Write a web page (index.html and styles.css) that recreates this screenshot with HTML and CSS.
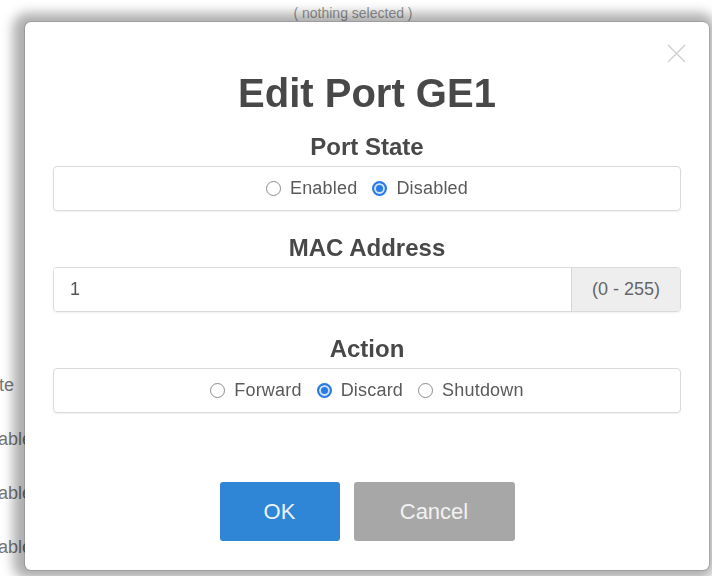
FILE: index.html
```html
<!DOCTYPE html>
<html lang="en">
<head>
    <meta charset="UTF-8">
    <meta name="viewport" content="width=device-width, initial-scale=1.0">
    <title>Edit Port GE1</title>
    <link rel="stylesheet" href="styles.css">
</head>
<body>
    <!-- page behind the dialog -->
    <div class="page">
        <div class="page-select">( nothing selected )</div>
        <div class="page-table">
            <div class="page-row page-row-head">State</div>
            <div class="page-row">Enabled</div>
            <div class="page-row">Enabled</div>
            <div class="page-row">Enabled</div>
        </div>
    </div>

    <div class="modal">
        <button class="modal-close" aria-label="Close">
            <svg width="19" height="19" viewBox="0 0 19 19">
                <path d="M1 1L18 18M18 1L1 18" stroke="#cfcfcf" stroke-width="1.4" fill="none"/>
            </svg>
        </button>

        <h1>Edit Port GE1</h1>

        <div class="field">
            <div class="field-title">Port State</div>
            <div class="field-box radios">
                <label class="radio"><input type="radio" name="state">Enabled</label>
                <label class="radio"><input type="radio" name="state" checked>Disabled</label>
            </div>
        </div>

        <div class="field">
            <div class="field-title">MAC Address</div>
            <div class="field-box input-group">
                <input type="text" value="1">
                <span class="addon">(0 - 255)</span>
            </div>
        </div>

        <div class="field">
            <div class="field-title">Action</div>
            <div class="field-box radios">
                <label class="radio"><input type="radio" name="action">Forward</label>
                <label class="radio"><input type="radio" name="action" checked>Discard</label>
                <label class="radio"><input type="radio" name="action">Shutdown</label>
            </div>
        </div>

        <div class="actions">
            <button class="btn btn-ok">OK</button>
            <button class="btn btn-cancel">Cancel</button>
        </div>
    </div>
</body>
</html>
```

FILE: styles.css
```css
body {
    margin: 0;
    font-family: "Liberation Sans", Arial, sans-serif;
    background: #fff;
    color: #555;
}
.page {
    height: 576px;
    overflow: hidden;
}
.page-select {
    text-align: center;
    padding-top: 5px;
    margin-left: -6px;
    font-size: 14px;
    color: #999;
}
.page-table {
    margin-top: 354px;
    margin-left: -24px;
    font-size: 18px;
    color: #777;
}
.page-row {
    height: 54px;
}
.page-row-head {
    text-indent: -4px;
}
/* dialog */
.modal {
    position: fixed;
    top: 22px;
    left: 25px;
    width: 684px;
    height: 548px;
    box-sizing: border-box;
    padding: 48px 28px 0;
    background: #fff;
    border-radius: 6px;
    box-shadow: 0 0 0 1px rgba(0, 0, 0, 0.12), -3px 0 12px 9px rgba(0, 0, 0, 0.32);
}
.modal-close {
    position: absolute;
    top: 22px;
    right: 23px;
    width: 19px;
    height: 19px;
    padding: 0;
    border: none;
    background: none;
    cursor: pointer;
}
.modal-close svg {
    display: block;
}
h1 {
    margin: 0 0 17px;
    font-size: 40px;
    line-height: 46px;
    text-align: center;
    color: #484848;
}
.field + .field {
    margin-top: 23px;
}
.field-title {
    font-size: 24px;
    line-height: 28px;
    font-weight: bold;
    text-align: center;
    color: #484848;
    margin-bottom: 5px;
}
.field-box {
    height: 45px;
    box-sizing: border-box;
    border: 1px solid #dadada;
    border-radius: 4px;
    box-shadow: 0 1px 2px rgba(0, 0, 0, 0.06);
    display: flex;
    align-items: center;
    overflow: hidden;
}
.radios {
    justify-content: center;
}
.radio {
    display: inline-flex;
    align-items: center;
    font-size: 18px;
    letter-spacing: 0.2px;
    color: #5a5a5a;
}
.radio + .radio {
    margin-left: 15px;
}
.radio input {
    appearance: none;
    width: 15px;
    height: 15px;
    margin: 0 9px 0 0;
    border: 1.5px solid #8c8c8c;
    border-radius: 50%;
    box-sizing: border-box;
    background: #fff;
}
.radio input:checked {
    border: 2px solid #2a7be4;
    background: #2a7be4;
    box-shadow: inset 0 0 0 2px #cfe2fb;
}
.input-group input {
    flex: 1;
    height: 100%;
    border: none;
    padding: 0 16px;
    font-family: inherit;
    font-size: 18px;
    color: #555;
    outline: none;
}
.addon {
    height: 100%;
    display: flex;
    align-items: center;
    padding: 0 20px;
    background: #eee;
    border-left: 1px solid #d6d6d6;
    font-size: 18px;
    color: #666;
}
.actions {
    display: flex;
    justify-content: center;
    gap: 14px;
    margin-top: 69px;
}
.btn {
    height: 59px;
    border: none;
    border-radius: 3px;
    font-family: inherit;
    font-size: 22px;
    cursor: pointer;
}
.btn-ok {
    width: 120px;
    background: #2f86d6;
    color: #eaf4ff;
}
.btn-cancel {
    width: 161px;
    background: #a7a7a7;
    color: #f2f2f2;
}
```
